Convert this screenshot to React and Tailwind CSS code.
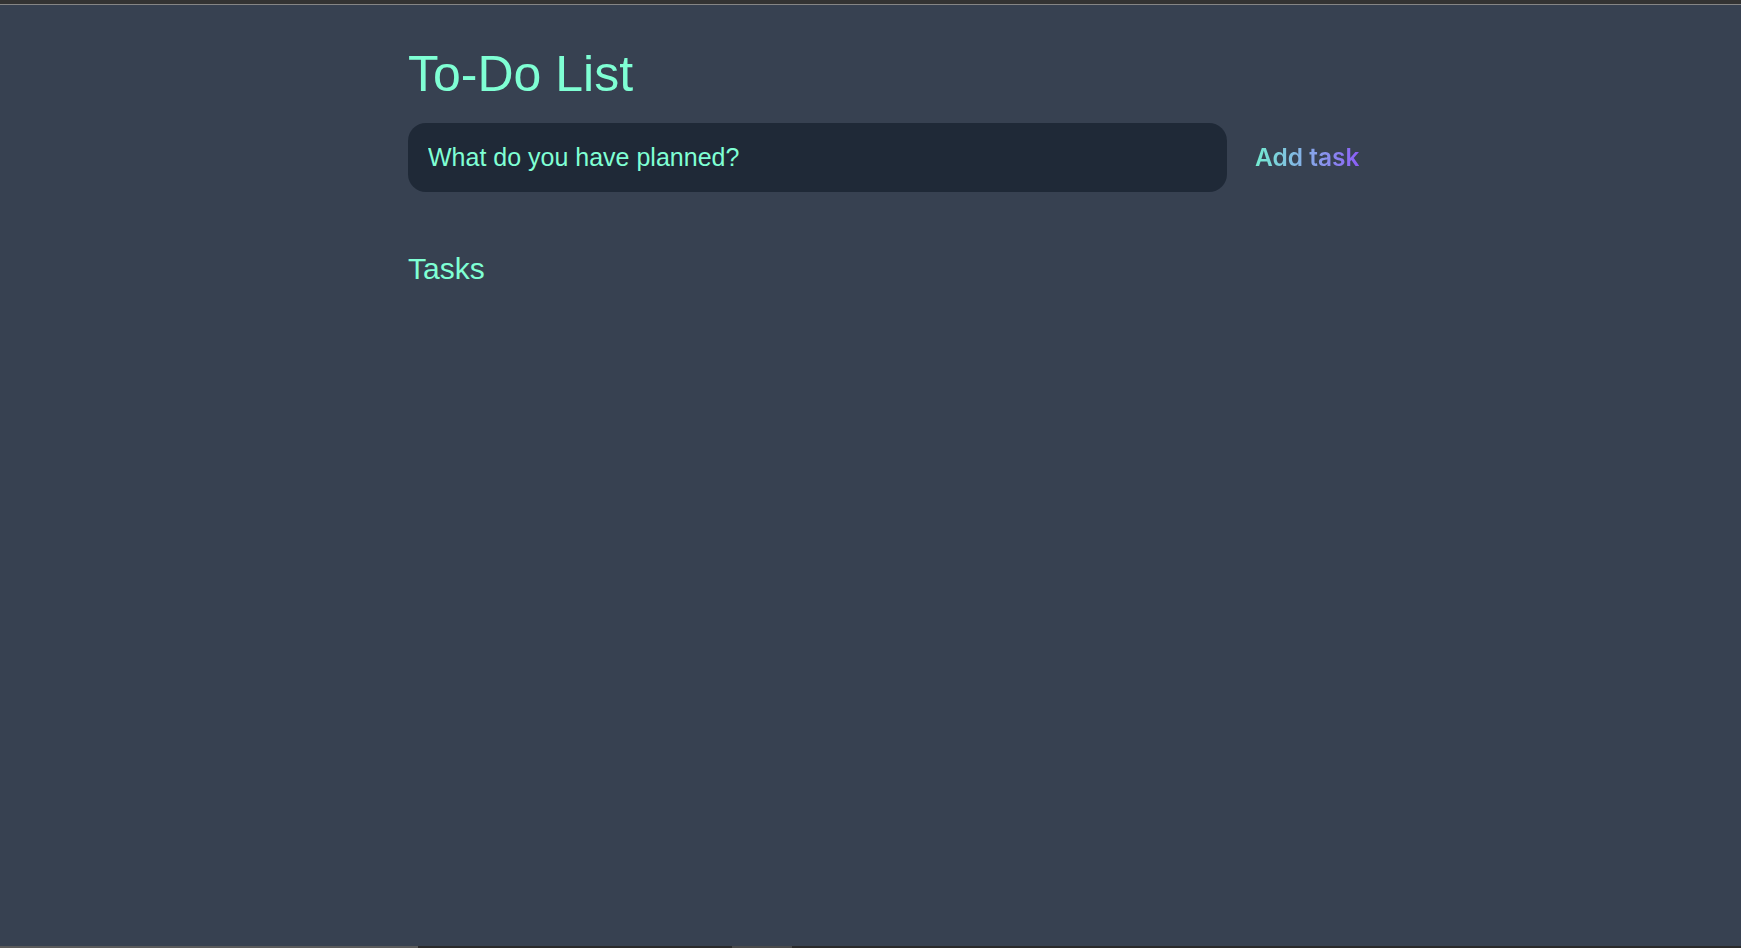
export default function App() {
	return (
		<div className="flex h-screen flex-col bg-[#374151] font-['Liberation_Sans',Arial,sans-serif]">
			<div className="h-[4px] shrink-0 bg-[#333333]" />
			<div className="h-px shrink-0 bg-[#858585]" />
			<main className="flex-1 pl-[408px] pt-[44px]">
				<h1 className="text-[50px] leading-none text-[#7fffd4]">To-Do List</h1>
				<form
					className="mt-[24px] flex items-center"
					onSubmit={(e) => e.preventDefault()}>
					<input
						type="text"
						placeholder="What do you have planned?"
						className="h-[69px] w-[819px] rounded-[18px] bg-[#1f2937] px-[20px] text-[25px] text-[#7fffd4] outline-none placeholder:text-[#7fffd4]"
					/>
					<button
						type="submit"
						className="ml-[28px] bg-gradient-to-r from-[#72ecd0] to-[#8b5cf6] bg-clip-text font-['Inter',sans-serif] text-[24.5px] font-semibold text-transparent">
						Add task
					</button>
				</form>
				<h2 className="mt-[62px] text-[30px] leading-none text-[#7fffd4]">Tasks</h2>
			</main>
			<div className="flex h-[2px] shrink-0 bg-[#2a2a2a]">
				<div className="w-[418px] bg-[#5a5a5a]" />
				<div className="ml-[314px] w-[60px] bg-[#4a4a4a]" />
			</div>
		</div>
	);
}
